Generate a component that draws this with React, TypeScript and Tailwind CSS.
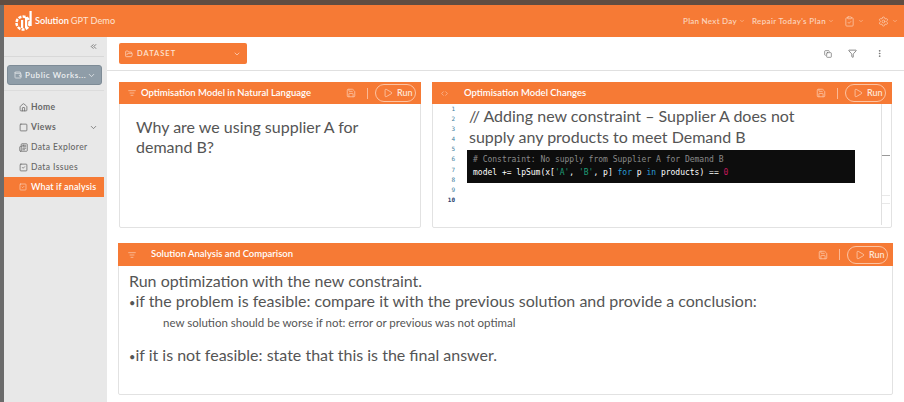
import {
  ChevronDown,
  ChevronsLeft,
  ClipboardCheck,
  Copy,
  Filter,
  FolderOpen,
  Home,
  ListFilter,
  MoreVertical,
  Play,
  Save,
  Settings,
  Square,
  SquareCheck,
  Wallet,
  Code,
  Newspaper,
} from 'lucide-react';

function Logo() {
  return (
    <svg width="20" height="24" viewBox="0 0 20 24" className="text-white -ml-[1px] mr-[1px]">
      <circle cx="9" cy="14" r="6.5" fill="none" stroke="currentColor" strokeWidth="2.5" strokeDasharray="3 1.2" />
      <rect x="7" y="11" width="2.2" height="8" fill="currentColor" />
      <rect x="11" y="8" width="2.2" height="11" fill="currentColor" />
      <rect x="15.5" y="2" width="2.2" height="15" fill="currentColor" />
    </svg>
  );
}

function RunControls() {
  return (
    <div className="flex items-center text-[#fde3d3]">
      <Save className="w-[10px] h-[10px] text-[#fbc4a4]" />
      <div className="w-px h-[11px] bg-[#fbb894] ml-[11px] mr-[7px]" />
      <div className="flex items-center gap-[4px] w-[41px] h-[18px] pl-[7px] rounded-full border border-[#fbc4a4]">
        <Play className="w-[10px] h-[10px]" strokeWidth={1.5} />
        <span className="text-[9px] font-semibold">Run</span>
      </div>
    </div>
  );
}

function NavItem({ icon: Icon, label, chevron, bold }: { icon: typeof Home; label: string; chevron?: boolean; bold?: boolean }) {
  return (
    <div className={`flex items-center h-[20px] pl-[15px] pr-[9px] text-[#666] text-[8.5px] tracking-[0.4px] ${bold ? 'font-bold' : 'font-medium'}`}>
      <Icon className="w-[9px] h-[9px] mr-[3px] shrink-0" />
      <span>{label}</span>
      {chevron && <ChevronDown className="w-[9px] h-[9px] ml-auto" />}
    </div>
  );
}

export default function App() {
  return (
    <div className="w-[904px] h-[402px] overflow-hidden flex flex-col bg-white font-['Lato',sans-serif]">
      <div className="h-[5px] bg-[#5f4d42] shrink-0" />
      <div className="flex flex-1 min-h-0">
        <div className="w-[4px] bg-[#6b6b6b] shrink-0" />
        <div className="flex-1 flex flex-col min-w-0">
          {/* Header */}
          <header className="h-[32px] bg-[#f67a35] flex items-center pl-[11px] pr-[6px] text-white shrink-0">
            <Logo />
            <span className="text-[9.2px] font-semibold">Solution</span>
            <span className="ml-[2px] text-[9.2px] text-[#fde3d3]">GPT Demo</span>
            <div className="ml-auto flex items-center text-[#fbd3bb] text-[8px] font-semibold tracking-[0.25px]">
              <span>Plan Next Day</span>
              <ChevronDown className="w-[6px] h-[6px] ml-[2px] mr-[7px]" />
              <span className="tracking-[0.35px]">Repair Today's Plan</span>
              <ChevronDown className="w-[6px] h-[6px] ml-[2px] mr-[10px]" />
              <ClipboardCheck className="w-[11px] h-[11px]" strokeWidth={1.5} />
              <ChevronDown className="w-[6px] h-[6px] ml-[3px] mr-[14px]" />
              <Settings className="w-[11px] h-[11px]" strokeWidth={1.5} />
              <ChevronDown className="w-[6px] h-[6px] ml-[3px]" />
            </div>
          </header>

          <div className="flex-1 flex min-h-0">
            {/* Sidebar */}
            <aside className="w-[103px] bg-[#e8e8e8] shrink-0 flex flex-col">
              <div className="h-[20px] mr-[3px] flex items-center justify-end pr-[6px] border-b border-[#d8d8d8] text-[#555]">
                <ChevronsLeft className="w-[9px] h-[9px]" />
              </div>
              <div className="mt-[8px] ml-[3px] w-[95px] h-[20px] rounded-[3px] bg-[#8f9da8] border border-[#7d8b96] flex items-center pl-[6px] pr-[5px] text-[#eef0f2] text-[8px] font-semibold tracking-[0.6px]">
                <Wallet className="w-[8px] h-[8px] mr-[3px] shrink-0" />
                <span>Public Works...</span>
                <ChevronDown className="w-[9px] h-[9px] ml-auto" />
              </div>
              <div className="mt-[5px] mr-[3px] border-b border-[#dcdcdc]" />
              <div className="mt-[6px]">
                <NavItem icon={Home} label="Home" bold />
                <NavItem icon={Square} label="Views" chevron bold />
                <NavItem icon={Newspaper} label="Data Explorer" />
                <NavItem icon={SquareCheck} label="Data Issues" />
              </div>
              <div className="w-[100px] h-[20px] bg-[#f67a35] flex items-center pl-[15px] text-white text-[9px] font-semibold tracking-[0.15px]">
                <SquareCheck className="w-[8px] h-[8px] mr-[4px] shrink-0 text-[#fbd3bb]" />
                <span>What if analysis</span>
              </div>
            </aside>

            {/* Main */}
            <main className="flex-1 min-w-0 flex flex-col">
              <div className="h-[34px] border-b border-[#e0e0e0] flex items-start pt-[6px] pl-[12px] pr-[20px] shrink-0">
                <div className="w-[128px] h-[21px] rounded-[2px] bg-[#f67a35] flex items-center pl-[6px] pr-[6px] text-[#fde3d3] text-[7.5px] font-semibold tracking-[1px]">
                  <FolderOpen className="w-[8px] h-[8px] mr-[4px]" />
                  <span>DATASET</span>
                  <ChevronDown className="w-[8px] h-[8px] ml-auto" />
                </div>
                <div className="ml-auto flex items-center h-[21px] text-[#666]">
                  <Copy className="w-[8px] h-[8px]" />
                  <Filter className="w-[9px] h-[9px] ml-[16px]" />
                  <MoreVertical className="w-[9px] h-[9px] ml-[18px]" />
                </div>
              </div>

              <div className="flex gap-[11px] pt-[11px] pl-[12px] pr-[11px]">
                {/* Natural language card */}
                <section className="w-[302px] h-[146px] rounded-[2px] border border-[#e2e2e2] bg-white">
                  <div className="h-[22px] -mx-px -mt-px bg-[#f67a35] flex items-center pl-[9px] pr-[5px] text-white">
                    <ListFilter className="w-[8px] h-[8px] mr-[5px] text-[#fbd3bb]" />
                    <span className="text-[9.5px] font-semibold">Optimisation Model in Natural Language</span>
                    <div className="ml-auto"><RunControls /></div>
                  </div>
                  <p className="pt-[13px] pl-[16px] pr-[40px] text-[16px] leading-[20px] text-[#555]">
                    Why are we using supplier A for demand B?
                  </p>
                </section>

                {/* Model changes card */}
                <section className="w-[460px] h-[146px] rounded-[2px] border border-[#e2e2e2] bg-white flex flex-col">
                  <div className="h-[22px] -mx-px -mt-px bg-[#f67a35] flex items-center pl-[9px] pr-[6px] text-white shrink-0">
                    <Code className="w-[7px] h-[7px] mr-[16px] text-[#fbd3bb]" />
                    <span className="text-[9.5px] font-semibold">Optimisation Model Changes</span>
                    <div className="ml-auto"><RunControls /></div>
                  </div>
                  <div className="flex flex-1 min-h-0">
                    <div className="w-[22px] font-['DejaVu_Sans_Mono',monospace] text-[6px] leading-[10.1px] text-right text-[#3d7d9c] shrink-0">
                      {[1, 2, 3, 4, 5, 6, 7, 8, 9].map((n) => (
                        <div key={n}>{n}</div>
                      ))}
                      <div className="font-bold text-[#1f3f6e]">10</div>
                    </div>
                    <div className="flex-1 pl-[12px] min-w-0">
                      <p className="pt-[2px] pl-[2px] pr-[60px] text-[16px] leading-[20.5px] text-[#555]">
                        // Adding new constraint – Supplier A does not supply any products to meet Demand B
                      </p>
                      <div className="mt-[3px] w-[388px] h-[33px] bg-[#0d0d0d] pl-[6px] pt-[3px] font-['DejaVu_Sans_Mono',monospace] text-[8px] leading-[13px] whitespace-pre text-white">
                        <div className="text-[#8a8a8a]"># Constraint: No supply from Supplier A for Demand B</div>
                        <div>
                          model += lpSum(x[<span className="text-[#1f9d76]">'A'</span>, <span className="text-[#1f9d76]">'B'</span>, p] <span className="text-[#2a9fd8]">for</span> p <span className="text-[#2a9fd8]">in</span> products) == <span className="text-[#c2185b]">0</span>
                        </div>
                      </div>
                    </div>
                    <div className="w-[9px] border-l border-[#e0e0e0] mb-[2px] mr-px shrink-0 flex flex-col">
                      <div className="mt-[51px] h-px bg-[#999]" />
                      <div className="mt-[39px] h-[9px] border-y border-[#e8e8e8]" />
                    </div>
                  </div>
                </section>
              </div>

              {/* Analysis card */}
              <section className="mt-[15px] ml-[11px] w-[775px] h-[152px] rounded-[2px] border border-[#e2e2e2] bg-white">
                <div className="h-[23px] -mx-px -mt-px bg-[#f67a35] flex items-center pl-[10px] pr-[5px] text-white">
                  <ListFilter className="w-[8px] h-[8px] mr-[15px] text-[#fbd3bb]" />
                  <span className="text-[9.5px] font-semibold">Solution Analysis and Comparison</span>
                  <div className="ml-auto"><RunControls /></div>
                </div>
                <div className="pt-[5px] pl-[10px] text-[16px] leading-[20px] text-[#555]">
                  <p>Run optimization with the new constraint.</p>
                  <p><span className="text-[11px]">•</span>if the problem is feasible: compare it with the previous solution and provide a conclusion:</p>
                  <p className="pl-[34px] text-[11.5px] leading-[19px]">new solution should be worse if not: error or previous was not optimal</p>
                  <p className="mt-[13px]"><span className="text-[11px]">•</span>if it is not feasible: state that this is the final answer.</p>
                </div>
              </section>
            </main>
          </div>
        </div>
      </div>
    </div>
  );
}
